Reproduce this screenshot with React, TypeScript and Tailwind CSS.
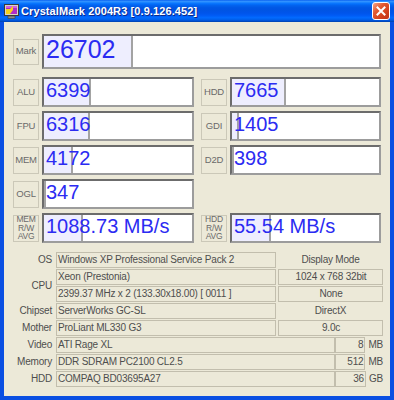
import React from "react";

const SANS = "font-['Liberation_Sans',Arial,sans-serif]";

function fillBg(f: number) {
  return {
    background: `linear-gradient(to right, #eeeefe 0px, #eeeefe ${f}px, #a3a3a3 ${f}px, #a3a3a3 ${f + 2}px, #ffffff ${f + 2}px, #ffffff 100%)`,
  };
}

function Label({ children, small }: { children: React.ReactNode; small?: boolean }) {
  return (
    <div
      className={`w-[26px] h-[27px] shrink-0 border border-[#cbc8b8] flex flex-col items-center justify-center ${
        small ? "text-[8.5px] leading-[8.5px]" : "text-[9.5px] leading-[10px]"
      } text-[#6a6a6a] tracking-[-0.2px]`}
    >
      {children}
    </div>
  );
}

function ScoreBox({ value, fill, w }: { value: string; fill: number; w: string }) {
  return (
    <div
      className={`${w} h-[30px] border-2 border-t-[#6c6c6c] border-l-[#6c6c6c] border-b-[#9c9c9c] border-r-[#9c9c9c] flex items-center pl-[2px] text-[20px] leading-none text-[#2b2bf2]`}
      style={fillBg(fill)}
    >
      <span className="pb-[4px]">{value}</span>
    </div>
  );
}

function Cell({
  label,
  value,
  fill,
  w,
  small,
}: {
  label: React.ReactNode;
  value: string;
  fill: number;
  w: string;
  small?: boolean;
}) {
  return (
    <div className="flex items-center gap-[3px]">
      <Label small={small}>{label}</Label>
      <ScoreBox value={value} fill={fill} w={w} />
    </div>
  );
}

function Three({ a }: { a: string }) {
  return (
    <>
      <span>{a}</span>
      <span>R/W</span>
      <span>AVG</span>
    </>
  );
}

const fieldCls =
  "h-[16px] border border-[#c2bead] flex items-center pl-[1px] whitespace-nowrap overflow-hidden";

function InfoLabel({ children, span }: { children: React.ReactNode; span?: boolean }) {
  return (
    <div className={`${span ? "row-span-2" : ""} flex items-center justify-end pr-[2px]`}>
      {children}
    </div>
  );
}

function SizeRow({ label, name, num, unit }: { label: string; name: string; num: string; unit: string }) {
  return (
    <>
      <InfoLabel>{label}</InfoLabel>
      <div className="col-span-2 flex items-center">
        <div className={`${fieldCls} w-[280px]`}>{name}</div>
        <div className={`${fieldCls} w-[31px] justify-end pr-[1px] pl-0`}>{num}</div>
        <span className="ml-[3px]">{unit}</span>
      </div>
    </>
  );
}

export default function App() {
  return (
    <div className={`w-[394px] h-[400px] flex flex-col bg-[#0a4fe2] ${SANS}`}>
      {/* Title bar */}
      <div className="h-[22px] shrink-0 flex items-center pl-[4px] pr-[4px] bg-[linear-gradient(to_bottom,#0058ee_0%,#3593ff_5%,#288eff_9%,#127dff_13%,#036ffc_18%,#0262ee_25%,#0057e5_35%,#0054e3_45%,#0055eb_60%,#005bf5_70%,#026afe_80%,#0062ef_88%,#0052d6_94%,#0040ab_100%)]">
        <svg width="15" height="15" viewBox="0 0 15 15" className="shrink-0">
          <rect x="0.5" y="0.5" width="14" height="11" fill="#d8d4c8" stroke="#3a3a3a" />
          <rect x="2" y="2" width="11" height="8" fill="#b02cc8" />
          <rect x="2" y="2" width="11" height="2" fill="#d060e0" />
          <polygon points="2,10 2,5 6,5 9,2 9,6 6,10" fill="#f5d21a" />
          <rect x="4" y="12" width="7" height="2.5" fill="#8a8a8a" stroke="#3a3a3a" strokeWidth="0.6" />
        </svg>
        <span className="ml-[2px] text-white font-bold text-[11px] leading-none tracking-[0.1px] [text-shadow:1px_1px_0_#0b2a8a]">
          CrystalMark 2004R3 [0.9.126.452]
        </span>
        <div className="ml-auto w-[18px] h-[18px] rounded-[3px] border border-white bg-[linear-gradient(135deg,#f3a58a_0%,#e25a32_35%,#d2401c_70%,#c0341a_100%)] flex items-center justify-center">
          <svg width="10" height="10" viewBox="0 0 10 10">
            <path d="M1.5 1.5 L8.5 8.5 M8.5 1.5 L1.5 8.5" stroke="#ffffff" strokeWidth="2" strokeLinecap="square" />
          </svg>
        </div>
      </div>

      {/* Client */}
      <div className="mx-[4px] mb-[4px] flex-1 bg-[#ece9d8] flex flex-col">
        <div className="pl-[9px] pt-[12px]">
          {/* Mark */}
          <div className="flex items-center gap-[3px]">
            <div className="w-[26px] h-[26px] shrink-0 border border-[#cbc8b8] flex items-center justify-center text-[9.5px] text-[#6a6a6a] tracking-[-0.2px]">
              Mark
            </div>
            <div
              className="w-[339px] h-[35px] border-2 border-t-[#6c6c6c] border-l-[#6c6c6c] border-b-[#9c9c9c] border-r-[#9c9c9c] flex items-center pl-[2px] text-[25px] leading-none text-[#2b2bf2]"
              style={fillBg(87)}
            >
              <span className="pb-[4px]">26702</span>
            </div>
          </div>

          <div className="mt-[8px] flex flex-col gap-[4px]">
            <div className="flex gap-[7px]">
              <Cell label="ALU" value="6399" fill={45} w="w-[152px]" />
              <Cell label="HDD" value="7665" fill={52} w="w-[151px]" />
            </div>
            <div className="flex gap-[7px]">
              <Cell label="FPU" value="6316" fill={44} w="w-[152px]" />
              <Cell label="GDI" value="1405" fill={5} w="w-[151px]" />
            </div>
            <div className="flex gap-[7px]">
              <Cell label="MEM" value="4172" fill={27} w="w-[152px]" />
              <Cell label="D2D" value="398" fill={0} w="w-[151px]" />
            </div>
            <div className="flex gap-[7px]">
              <Cell label="OGL" value="347" fill={0} w="w-[152px]" />
            </div>
            <div className="flex gap-[7px]">
              <Cell label={<Three a="MEM" />} value="1088.73 MB/s" fill={37} w="w-[152px]" small />
              <Cell label={<Three a="HDD" />} value="55.54 MB/s" fill={37} w="w-[151px]" small />
            </div>
          </div>
        </div>

        {/* Info */}
        <div className="mt-[9px] grid grid-cols-[50px_220px_105px] gap-x-[2px] gap-y-[1px] auto-rows-[16px] text-[10px] leading-none text-[#4e4e4e] tracking-[-0.2px]">
          <InfoLabel>OS</InfoLabel>
          <div className={fieldCls}>Windows XP Professional Service Pack 2</div>
          <div className="flex items-center justify-center">Display Mode</div>

          <InfoLabel span>CPU</InfoLabel>
          <div className={fieldCls}>Xeon (Prestonia)</div>
          <div className={`${fieldCls} justify-center pl-0`}>1024 x 768 32bit</div>

          <div className={fieldCls}>2399.37 MHz x 2 (133.30x18.00) [ 0011 ]</div>
          <div className={`${fieldCls} justify-center pl-0`}>None</div>

          <InfoLabel>Chipset</InfoLabel>
          <div className={fieldCls}>ServerWorks GC-SL</div>
          <div className="flex items-center justify-center">DirectX</div>

          <InfoLabel>Mother</InfoLabel>
          <div className={fieldCls}>ProLiant ML330 G3</div>
          <div className={`${fieldCls} justify-center pl-0`}>9.0c</div>

          <SizeRow label="Video" name="ATI Rage XL" num="8" unit="MB" />
          <SizeRow label="Memory" name="DDR SDRAM PC2100 CL2.5" num="512" unit="MB" />
          <SizeRow label="HDD" name="COMPAQ BD03695A27" num="36" unit="GB" />
        </div>
      </div>
    </div>
  );
}
